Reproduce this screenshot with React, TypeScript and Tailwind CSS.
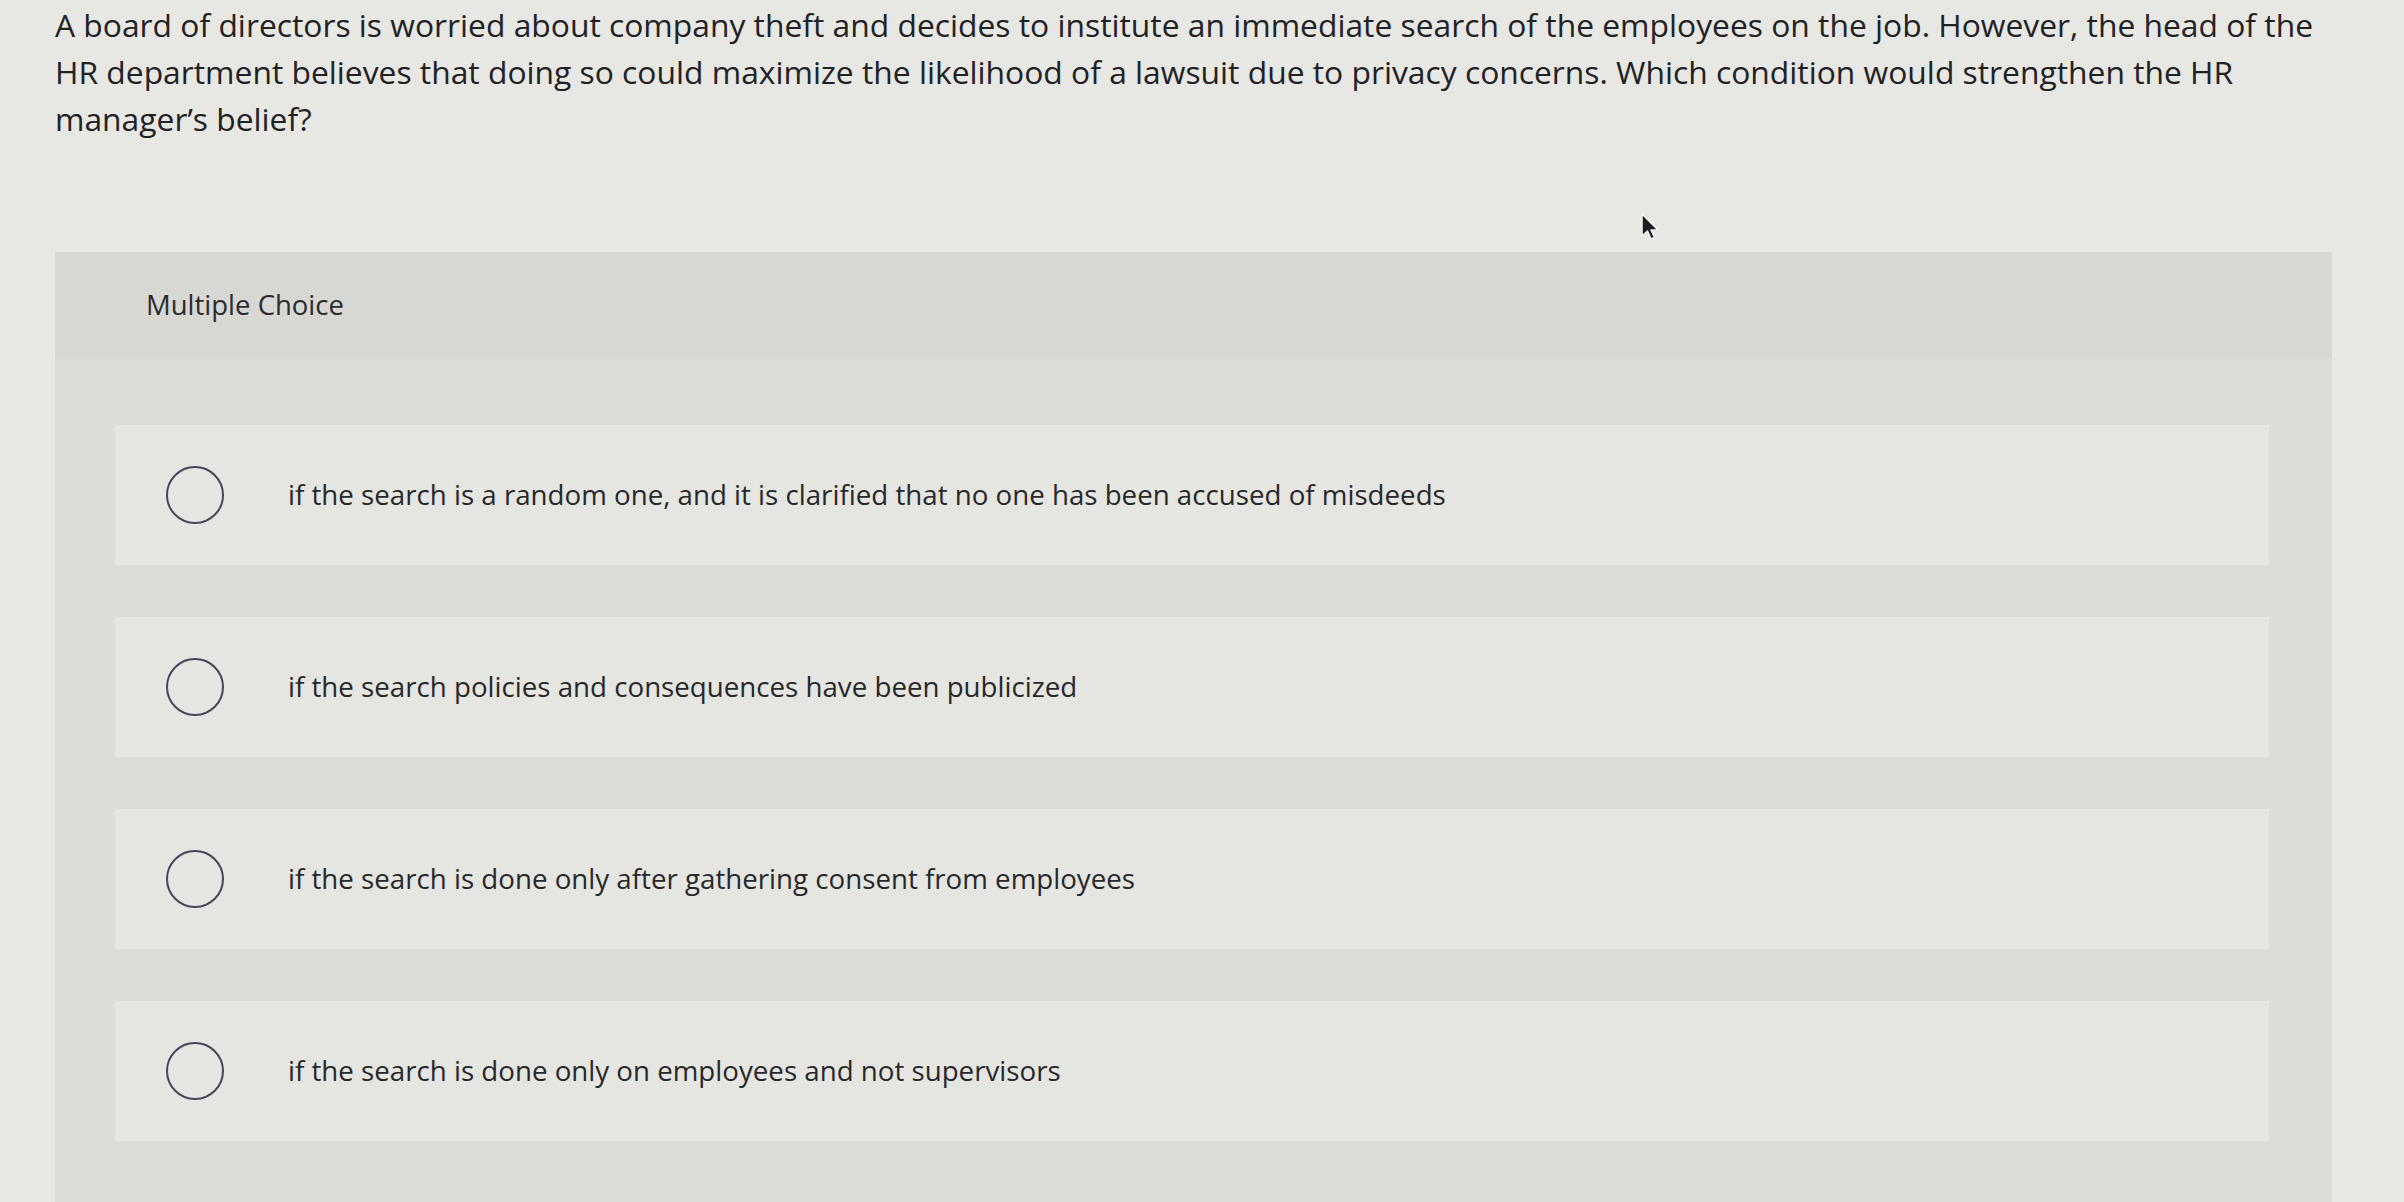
import React from 'react';

const OPTIONS = [
  'if the search is a random one, and it is clarified that no one has been accused of misdeeds',
  'if the search policies and consequences have been publicized',
  'if the search is done only after gathering consent from employees',
  'if the search is done only on employees and not supervisors',
] as const;

const font = { fontFamily: '"Open Sans", Lato, sans-serif' };

function Cursor() {
  return (
    <svg className="absolute left-[1640px] top-[212px]" width="22" height="30" viewBox="0 0 22 30">
      <path d="M2 2 L2 24 L7.5 19 L11 27 L14.5 25.5 L11 18 L18 18 Z" fill="#1c1c22" stroke="#f4f4f0" strokeWidth="1.5" strokeLinejoin="round" />
    </svg>
  );
}

export default function App() {
  return (
    <div className="relative h-[1202px] w-full overflow-hidden bg-[#e7e7e3] px-[55px] pt-px" style={font}>
      <p className="max-w-[2290px] text-[31.8px] leading-[47px] text-[#222224]">
        A board of directors is worried about company theft and decides to institute an immediate search of the employees on the job. However, the head of the HR department believes that doing so could maximize the likelihood of a lawsuit due to privacy concerns. Which condition would strengthen the HR manager’s belief?
      </p>

      <div className="mt-[110px] w-[2277px] bg-[#dcdcd8] pb-[200px]">
        {/* header band */}
        <div className="flex h-[106px] items-center bg-[#d7d7d3] pl-[91px]">
          <span className="text-[27.5px] text-[#2b2b2e]">Multiple Choice</span>
        </div>

        {/* options */}
        <div className="flex flex-col gap-[52px] pl-[60px] pr-[63px] pt-[67px]">
          {OPTIONS.map((opt, idx) => (
            <div key={idx} className="flex h-[140px] items-center bg-[#e5e5e1] pl-[51px]">
              <span className="h-[58px] w-[58px] shrink-0 rounded-full border-[2.5px] border-[#47465a]" />
              <span className="ml-[64px] text-[27.7px] text-[#28282b]">{opt}</span>
            </div>
          ))}
        </div>
      </div>

      <Cursor />
    </div>
  );
}
